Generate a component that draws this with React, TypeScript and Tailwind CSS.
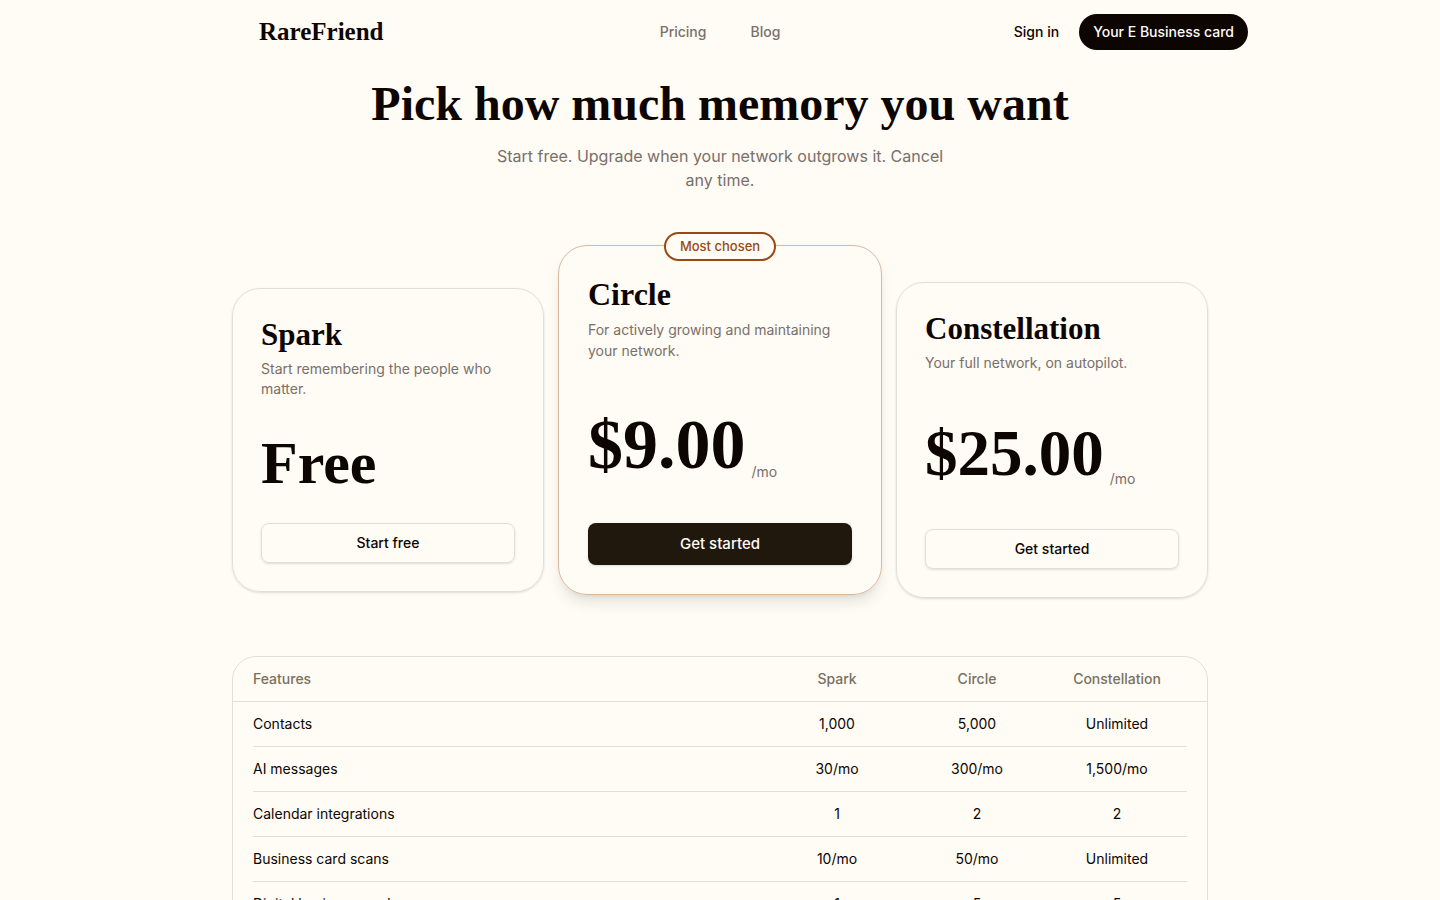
import { clsx } from 'clsx'

interface Plan {
  name: string
  description: string
  price: string
  period?: string
  cta: string
  featured?: boolean
}

const PLANS: Plan[] = [
  { name: 'Spark', description: 'Start remembering the people who matter.', price: 'Free', cta: 'Start free' },
  { name: 'Circle', description: 'For actively growing and maintaining your network.', price: '$9.00', period: '/mo', cta: 'Get started', featured: true },
  { name: 'Constellation', description: 'Your full network, on autopilot.', price: '$25.00', period: '/mo', cta: 'Get started' },
]

const FEATURES: { label: string; values: string[] }[] = [
  { label: 'Contacts', values: ['1,000', '5,000', 'Unlimited'] },
  { label: 'AI messages', values: ['30/mo', '300/mo', '1,500/mo'] },
  { label: 'Calendar integrations', values: ['1', '2', '2'] },
  { label: 'Business card scans', values: ['10/mo', '50/mo', 'Unlimited'] },
  { label: 'Digital business card', values: ['1', '5', '5'] },
]

function Header() {
  return (
    <header className="mx-auto grid h-16 max-w-[1056px] grid-cols-[1fr_auto_1fr] items-center">
      <a href="#" className="ml-[67px] justify-self-start font-['Liberation_Serif',serif] text-[25px] font-bold">
        RareFriend
      </a>
      <nav className="flex gap-11 font-medium text-[#78706a]">
        <a href="#pricing">Pricing</a>
        <a href="#blog">Blog</a>
      </nav>
      <div className="flex items-center gap-5 justify-self-end font-medium">
        <a href="#sign-in">Sign in</a>
        <a href="#card" className="flex h-9 items-center rounded-full bg-[#0c0502] px-3.5 text-[#fffbf5]">
          Your E Business card
        </a>
      </div>
    </header>
  )
}

function PlanCard({ plan }: { plan: Plan }) {
  const { featured, period } = plan

  return (
    <article
      className={clsx(
        'relative border',
        featured
          ? '-mx-1.5 -mt-[27px] mb-[13px] rounded-[29px] border-[#d9b99c] p-[29px] shadow-lg'
          : 'rounded-[28px] border-[#e2dfda] p-7 shadow-sm',
      )}
    >
      {featured && (
        <span className="absolute -top-3.5 left-1/2 flex h-[29px] w-28 -translate-x-1/2 items-center justify-center rounded-full border-2 border-[#9a4a12] bg-[#fffbf5] text-[13px] font-medium text-[#9a4a12]">
          Most chosen
        </span>
      )}
      <h2
        className={clsx(
          "font-['Liberation_Serif',serif] font-bold",
          featured ? 'text-[32px] leading-[38px]' : 'text-[31px] leading-9',
        )}
      >
        {plan.name}
      </h2>
      <p className={clsx('mt-1.5 text-[#78706a]', featured && 'leading-[21px]')}>{plan.description}</p>
      <div
        className={clsx(
          'flex items-end gap-1.5',
          featured ? 'mt-[29px] py-[17px] leading-[75px]' : 'mt-7 leading-[72px]',
          period && !featured && 'py-4',
        )}
      >
        <span
          className={clsx(
            "font-['Liberation_Serif',serif] font-bold",
            featured && 'text-[70px]',
            period && !featured && 'text-[65px]',
            !period && 'text-[60px]',
          )}
        >
          {plan.price}
        </span>
        {period && <span className="leading-5 text-[#78706a]">{period}</span>}
      </div>
      <button
        type="button"
        className={clsx(
          'mt-6 w-full rounded-lg font-medium shadow-sm',
          featured ? 'h-[42px] bg-[#21180d] text-[15px] text-[#fffbf5]' : 'h-10 border border-[#e2dfda]',
        )}
      >
        {plan.cta}
      </button>
    </article>
  )
}

function FeatureTable() {
  return (
    <div className="mt-12 rounded-3xl border border-[#e2dfda]">
      <table className="w-full table-fixed border-separate border-spacing-0">
        <thead className="text-[#787060]">
          <tr className="h-[45px]">
            <td className="w-5 border-b border-[#e2dfda]" />
            <th scope="col" className="border-b border-[#e2dfda] text-left font-medium">Features</th>
            {PLANS.map((plan) => (
              <th key={plan.name} scope="col" className="w-[140px] border-b border-[#e2dfda] font-medium">{plan.name}</th>
            ))}
            <td className="w-5 border-b border-[#e2dfda]" />
          </tr>
        </thead>
        <tbody>
          {FEATURES.map(({ label, values }) => (
            <tr key={label} className="h-[45px]">
              <td />
              <th scope="row" className="border-b border-[#e2dfda] text-left font-normal">{label}</th>
              {values.map((value, i) => (
                <td key={i} className="border-b border-[#e2dfda] text-center">{value}</td>
              ))}
              <td />
            </tr>
          ))}
        </tbody>
      </table>
    </div>
  )
}

export default function App() {
  return (
    <div className="min-h-screen bg-[#fffbf5] font-['Inter',sans-serif] text-sm text-[#0c0502]">
      <Header />
      <main className="mx-auto max-w-[976px]">
        <div className="pt-3 text-center">
          <h1 className="font-['Liberation_Serif',serif] text-5xl leading-14 font-bold">Pick how much memory you want</h1>
          <p className="mx-auto mt-3 max-w-md text-base text-[#78706a]">
            Start free. Upgrade when your network outgrows it. Cancel any time.
          </p>
        </div>
        <section className="mt-20 grid grid-cols-3 items-center gap-5">
          {PLANS.map((plan) => (
            <PlanCard key={plan.name} plan={plan} />
          ))}
        </section>
        <FeatureTable />
      </main>
    </div>
  )
}
